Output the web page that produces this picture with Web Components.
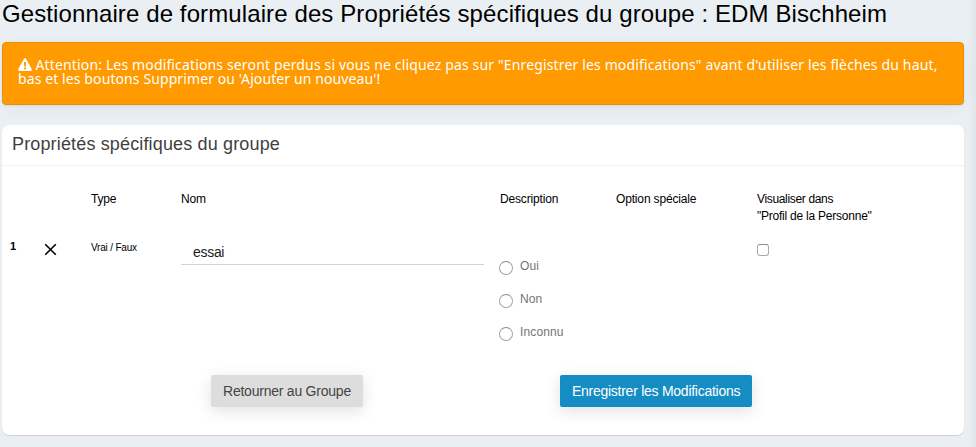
<!DOCTYPE html>
<html lang="fr">
<head>
<meta charset="utf-8">
<title>Gestionnaire de formulaire</title>
<style>
  body { margin: 0; background: #eaeff3; font-family: "Liberation Sans", Arial, sans-serif; color: #000; }
</style>
</head>
<body>
<group-page>
  <page-title slot="title">Gestionnaire de formulaire des Propriétés spécifiques du groupe : EDM Bischheim</page-title>
  <warning-alert>Attention: Les modifications seront perdus si vous ne cliquez pas sur "Enregistrer les modifications" avant d'utiliser les flèches du haut,<br><span style="letter-spacing:.1px">bas et les boutons Supprimer ou 'Ajouter un nouveau'!</span></warning-alert>
  <panel-card>
    <span slot="title">Propriétés spécifiques du groupe</span>
    <property-table></property-table>
    <action-button slot="actions" style="margin-right:197px;--gap:-.23px">Retourner au Groupe</action-button>
    <action-button slot="actions" primary style="--gap:-.26px">Enregistrer les Modifications</action-button>
  </panel-card>
</group-page>
<script>
const define = (name, html) => customElements.define(name, class extends HTMLElement {
  connectedCallback() {
    if (!this.shadowRoot) this.attachShadow({ mode: 'open' }).innerHTML = html;
  }
});

define('page-title', `
  <style>
    :host { display: block; height: 42px; padding-left: 2px; box-sizing: border-box; }
    h1 { margin: 0; font-size: 24px; line-height: 28px; font-weight: 400; letter-spacing: .11px; white-space: nowrap; }
  </style><h1><slot></slot></h1>`);

define('warning-alert', `
  <style>
    :host { display: block; box-sizing: border-box; height: 63px; padding: 15px 15px 0; background: #ff9a00;
      border: 1px solid #ed8e00; border-radius: 4px; color: #fff; box-shadow: 0 4px 18px rgba(0,0,0,.035), 0 1px 2px rgba(0,0,0,.08); }
    p { margin: 0; font: 14px/14px "Noto Sans", sans-serif; letter-spacing: .145px; white-space: nowrap; }
    svg { width: 14px; height: 13px; margin-right: 3.5px; vertical-align: -1px; }
  </style>
  <p><svg viewBox="0 0 14 13"><path fill="#fff" fill-rule="evenodd" d="M6.1.6Q7-.5 7.9.6L13.8 11.2Q14.2 12.6 12.9 13H1.1Q-.2 12.6.2 11.2ZM5.9 4.1 6.2 8.6H7.8L8.1 4.1ZM6 9.5V11.3H8V9.5Z"/></svg><slot></slot></p>`);

define('panel-card', `
  <style>
    :host { display: flex; flex-direction: column; height: 310px; margin-top: 20px; background: #fff; border-radius: 7px; box-shadow: 0 1px 1px rgba(0,0,0,.12); }
    header { box-sizing: border-box; height: 41px; padding: 8px 10px 0; border-bottom: 1px solid #f1f2f3; color: #3f3f3f; font-size: 18px; line-height: 22px; letter-spacing: .15px; }
    main { flex: 1; }
    footer { display: flex; padding: 0 0 28px 209px; }
  </style>
  <header><slot name="title"></slot></header><main><slot></slot></main><footer><slot name="actions"></slot></footer>`);

define('action-button', `
  <style>
    :host { display: block; }
    button { display: block; height: 32px; padding: 0 12px; border: 0; border-radius: 2px; background: #ddd; color: #444;
      font: 14px/32px "Liberation Sans", sans-serif; letter-spacing: var(--gap); white-space: nowrap; box-shadow: 0 4px 16px rgba(0,0,0,.12); }
    :host([primary]) button { background: #158cc2; color: #fff; }
  </style><button><slot></slot></button>`);

define('radio-option', `
  <style>
    :host { display: flex; height: 33px; gap: 7px; color: #757575; font-size: 12px; line-height: 14px; letter-spacing: .13px; }
    i { box-sizing: border-box; width: 14px; height: 14px; margin: 2px 0 0 -1px; border: 1px solid #a6a6a6; border-top-color: #8e8e8e; border-radius: 50%; }
  </style><i></i><span><slot></slot></span>`);

define('check-box', `
  <style>
    :host { display: block; box-sizing: border-box; width: 12px; height: 12px; border: 1px solid #aaa; border-top-color: #8c8c8c; border-radius: 3px; }
  </style>`);

define('text-field', `
  <style>
    :host { display: block; box-sizing: border-box; width: 303px; height: 26px; padding: 5px 12px 0; border-bottom: 1px solid #d0d0df; color: #1c1c1c; font-size: 14px; line-height: 16px; letter-spacing: -.3px; }
  </style><slot></slot>`);

define('property-table', `
  <style>
    :host { display: block; padding: 25px 0 0 8px; font-size: 12px; }
    .grid { display: grid; grid-template-columns: 34px 47px 90px 319px 116px 141px 1fr; grid-template-rows: 48px auto; line-height: 17px; letter-spacing: -.16px; white-space: nowrap; }
    .wide { letter-spacing: -.23px; }
    b { font-size: 11px; line-height: 14px; }
    small { font-size: 10px; line-height: 14px; letter-spacing: -.19px; }
    svg { width: 13px; height: 13px; }
  </style>
  <div class="grid">
    <span></span><span></span><span>Type</span><span>Nom</span><span>Description</span><span>Option spéciale</span>
    <span class="wide"><span style="letter-spacing:-.34px">Visualiser dans</span><br>"Profil de la Personne"</span>
    <b>1</b>
    <svg viewBox="0 0 13 13" style="margin-top:4px"><path d="M1.2 1.2 11.8 11.8M11.8 1.2 1.2 11.8" stroke="#000" stroke-width="1.6"/></svg>
    <small style="margin-top:2px">Vrai / Faux</small>
    <text-field>essai</text-field>
    <div style="padding-top:20px"><radio-option>Oui</radio-option><radio-option>Non</radio-option><radio-option>Inconnu</radio-option></div>
    <span></span>
    <check-box style="margin-top:5px"></check-box>
  </div>`);

define('group-page', `
  <style>
    :host { display: grid; grid-template-columns: 962px 1fr; min-height: 447px; padding-left: 2px; box-sizing: border-box; overflow: hidden;
      background: linear-gradient(to left, #e1e6eb, #eaeff3 8px); }
    section { min-width: 0; }
    ::slotted(page-title) { margin-left: -2px; }
  </style><section><slot name="title"></slot><slot></slot></section>`);
</script>
</body>
</html>
